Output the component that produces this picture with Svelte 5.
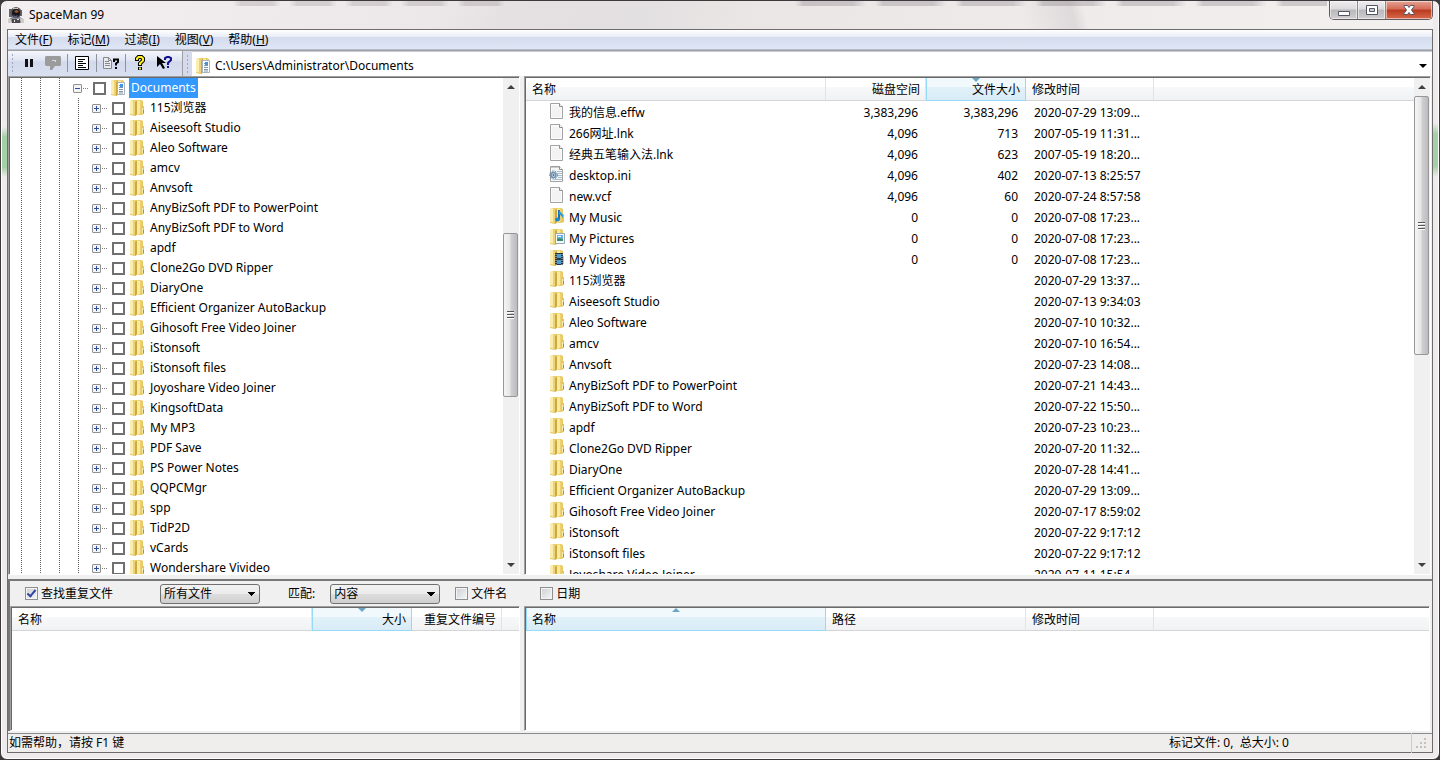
<script lang="ts">
  type Icon = 'file' | 'ini' | 'folder' | 'docs' | 'music' | 'pictures' | 'videos';

  interface Row {
    icon: Icon;
    name: string;
    disk?: string;
    size?: string;
    time: string;
  }

  const menus = [
    ['文件', 'F'],
    ['标记', 'M'],
    ['过滤', 'I'],
    ['视图', 'V'],
    ['帮助', 'H'],
  ];

  const folders = [
    '115浏览器', 'Aiseesoft Studio', 'Aleo Software', 'amcv', 'Anvsoft',
    'AnyBizSoft PDF to PowerPoint', 'AnyBizSoft PDF to Word', 'apdf',
    'Clone2Go DVD Ripper', 'DiaryOne', 'Efficient Organizer AutoBackup',
    'Gihosoft Free Video Joiner', 'iStonsoft', 'iStonsoft files',
    'Joyoshare Video Joiner', 'KingsoftData', 'My MP3', 'PDF Save',
    'PS Power Notes', 'QQPCMgr', 'spp', 'TidP2D', 'vCards', 'Wondershare Vivideo',
  ];

  const folderTimes = [
    '2020-07-29 13:37...', '2020-07-13 9:34:03', '2020-07-10 10:32...', '2020-07-10 16:54...',
    '2020-07-23 14:08...', '2020-07-21 14:43...', '2020-07-22 15:50...', '2020-07-23 10:23...',
    '2020-07-20 11:32...', '2020-07-28 14:41...', '2020-07-29 13:09...', '2020-07-17 8:59:02',
    '2020-07-22 9:17:12', '2020-07-22 9:17:12', '2020-07-11 15:54...',
  ];

  const rows: Row[] = [
    { icon: 'file', name: '我的信息.effw', disk: '3,383,296', size: '3,383,296', time: '2020-07-29 13:09...' },
    { icon: 'file', name: '266网址.lnk', disk: '4,096', size: '713', time: '2007-05-19 11:31...' },
    { icon: 'file', name: '经典五笔输入法.lnk', disk: '4,096', size: '623', time: '2007-05-19 18:20...' },
    { icon: 'ini', name: 'desktop.ini', disk: '4,096', size: '402', time: '2020-07-13 8:25:57' },
    { icon: 'file', name: 'new.vcf', disk: '4,096', size: '60', time: '2020-07-24 8:57:58' },
    { icon: 'music', name: 'My Music', disk: '0', size: '0', time: '2020-07-08 17:23...' },
    { icon: 'pictures', name: 'My Pictures', disk: '0', size: '0', time: '2020-07-08 17:23...' },
    { icon: 'videos', name: 'My Videos', disk: '0', size: '0', time: '2020-07-08 17:23...' },
    ...folderTimes.map((time, i): Row => ({ icon: 'folder', name: folders[i], time })),
  ];

  let findDuplicates = $state(true);
  let matchName = $state(false);
  let matchDate = $state(false);
</script>

{#snippet icon(kind: Icon)}
  <svg class="icon" viewBox="0 0 16 16" aria-hidden="true">
    {#if kind === 'file' || kind === 'ini'}
      <path d="M1.5.5h9l3 3v12h-12z" fill="#fbfbfb" stroke="#a3a3a3" />
      <path d="M3 14V2l6 1 3 3v8z" fill="#f3f3f3" />
      <path d="M10.5.5v3h3" fill="#fff" stroke="#8d8d8d" />
      {#if kind === 'ini'}
        <path d="M3 0v2M5 0v2M7 0v2M9 0v2" stroke="#999" />
        <path d="M8 5.500h5M9 7.500h4M9 9.500h4M9 11.500h4M5 13.500h8" stroke="#a9bfd2" />
        <circle cx="4.500" cy="9" r="4" fill="none" stroke="#5f87a8" stroke-dasharray="1.600 1.200" />
        <circle cx="4.500" cy="9" r="2.500" fill="#dce8f1" stroke="#6c92b2" stroke-width="1.500" />
        <circle cx="4.500" cy="9" r="1" fill="#3d6688" />
      {/if}
    {:else}
      <path d="M1 1 4 0h8l2 1v5l1 1v7l-3 1H8l-2 1-5-1z" fill="#e6c964" />
      <path d="M1 1l3-1v14.500L1 14z" fill="#f9edb0" />
      <path d="M4 .5h3V15l-3-.5z" fill="#ecd27a" />
      <path d="M6 2 8 1v13l-2 2z" fill="#cfa740" />
      <path d="M8 .5h3V14l-3 1z" fill="#faeb9c" />
      <path d="M11 .5h1.500V14H11z" fill="#ecd272" />
      <path d="M12.500 6H15v8h-2.500z" fill="#e3c460" />
      {#if kind === 'folder'}
        <path d="M14.500 10v3" stroke="#4ba0c8" />
        <path d="M13.500 8v5" stroke="#f7ecae" />
      {:else if kind === 'docs'}
        <path d="M7.500 2.500h7v12h-7z" fill="#fff" stroke="#a8b4c0" />
        <path d="M9 5.500h1M9 7.500h4M9 9.500h4M9 11.500h4M9 13h4" stroke="#8195a8" />
        <path d="M10 4h3v3h-3z" fill="#3c97e0" />
      {:else if kind === 'music'}
        <path d="M10 2v9" stroke="#1473b8" stroke-width="2" />
        <path d="M10 2c1 3 5 3 4 8-1-2-3-3-4-4z" fill="#2b9be0" />
        <ellipse cx="8.500" cy="11.500" rx="2.500" ry="2" fill="#1f86cc" />
      {:else if kind === 'pictures'}
        <path d="M6.500 4.500h9v10h-9z" fill="#f6fafd" stroke="#9aa7b2" />
        <path d="M8 6h6v6H8z" fill="#63b3e6" />
        <path d="M8 10l2-1 4 1v2H8z" fill="#3c8b6e" />
        <path d="M9 7h3v1H9z" fill="#fff" />
      {:else}
        <path d="M6 3h8v12H6z" fill="#27353f" />
        <path d="M8 4h4v4H8zM8 10h4v4H8z" fill="#4a9fd2" />
        <path d="M7 4v11M13 4v11" stroke="#c9d2d8" stroke-dasharray="1 1" />
      {/if}
    {/if}
  </svg>
{/snippet}

{#snippet scrollbar(before: number, thumb: number, after: number)}
  <div class="scrollbar">
    <button class="arrow" aria-label="向上滚动">
      <svg viewBox="0 0 8 4"><path d="M4 0l4 4H0z" /></svg>
    </button>
    <div class="track" style="flex-grow: {before}"></div>
    <div class="thumb" style="flex-grow: {thumb}">
      <svg viewBox="0 0 7 8"><path d="M0 .5h7M0 3.500h7M0 6.500h7" stroke="#555" /><path d="M0 1.500h7M0 4.500h7M0 7.500h7" stroke="#fff" /></svg>
    </div>
    <div class="track" style="flex-grow: {after}"></div>
    <button class="arrow" aria-label="向下滚动">
      <svg viewBox="0 0 8 4"><path d="M0 0h8L4 4z" /></svg>
    </button>
  </div>
{/snippet}

<div class="window">
  <header class="titlebar">
    <svg class="app-icon" viewBox="0 0 16 16" aria-hidden="true">
      <path d="M0 16l1-4 3-2h8l3 2 1 4z" fill="#8d8a8e" />
      <path d="M0 12l2-1 2 5H0zM12 11l4 1v4h-3z" fill="#cfcccb" />
      <path d="M4 12h8v4H4z" fill="#4a484c" />
      <path d="M6 13h1v2H6zM9 12h2v1H9z" fill="#e8e6e4" />
      <path d="M1 2h3v8H1zM12 3h2v6h-2z" fill="#69666a" />
      <circle cx="8" cy="5.500" r="5.500" fill="#59565a" />
      <circle cx="8" cy="6" r="4" fill="#161418" />
      <path d="M6 4l3-1 2 2-3 1z" fill="#9c5a3a" />
      <path d="M5 7l2 2 3-1-1 2H6z" fill="#47628c" />
      <path d="M5 1h5v1H5z" fill="#c8c4c2" />
    </svg>
    <h1>SpaceMan 99</h1>
    <div class="captions">
      <button class="caption" aria-label="最小化">
        <svg viewBox="0 0 14 14"><path d="M1.500 8.500h11v4h-11z" fill="#fff" stroke="#535666" /></svg>
      </button>
      <button class="caption" aria-label="最大化">
        <svg viewBox="0 0 14 14"><path d="M1.500 2.500h11v9h-11z" fill="#fff" stroke="#535666" /><path d="M4.500 5.500h5v3h-5z" fill="#ccc" stroke="#535666" /></svg>
      </button>
      <button class="caption close" aria-label="关闭">
        <svg viewBox="0 0 14 14"><path d="M2 2.500h3.500L7 4.500l1.500-2H12v1L9.500 7l2.500 3.500v1H8.500L7 9.500l-1.500 2H2v-1L4.500 7 2 3.500z" fill="#fff" stroke="#535666" /></svg>
      </button>
    </div>
  </header>

  <main class="client">
    <nav class="menubar">
      {#each menus as [label, key]}
        <button class="menu">{label}(<u>{key}</u>)</button>
      {/each}
    </nav>

    <div class="rebar">
      <div class="toolbar">
        <span class="grip"></span>
        <button class="tool" aria-label="暂停">
          <svg viewBox="0 0 16 16"><path d="M4 4h3v8H4zM9 4h3v8H9z" fill="#111" /></svg>
        </button>
        <button class="tool" aria-label="注释">
          <svg viewBox="0 0 16 16"><path d="M1 1h14l1 1v8l-1 1h-5l-3 4H5v-4H1l-1-1V2z" fill="#9b9b9b" /><path d="M7 5h4v1H7zM10 6h1v1h-1z" fill="#d5d9e8" /></svg>
        </button>
        <span class="rule"></span>
        <button class="tool" aria-label="属性">
          <svg viewBox="0 0 16 16"><path d="M1.500 1.500h13v13h-13z" fill="#fff" stroke="#000" /><path d="M4 4.500h7M4 6.500h5M4 8.500h8M4 10.500h5M4 12.500h8" stroke="#000" /></svg>
        </button>
        <span class="rule"></span>
        <button class="tool" aria-label="文件信息">
          <svg viewBox="0 0 16 16"><path d="M.5 2.500h5l3 3v8h-8z" fill="#e8ebf2" stroke="#888" /><path d="M5.500 2.500v3h3M2 6.500h4M2 8.500h5M2 10.500h5" fill="none" stroke="#888" /><path d="M11 7V4.500h4V7l-2 1.500v2M13 12v2" fill="none" stroke="#000" stroke-width="2" /></svg>
        </button>
        <span class="rule"></span>
        <button class="tool" aria-label="帮助">
          <svg viewBox="0 0 16 16"><path d="M5 6V3.500L6.500 2h3L11 3.500v2L8 8.500V11M8 12v3" fill="none" stroke="#000" stroke-width="4" /><path d="M5 5V3.500L6.500 2h3L11 3.500v2L8 8.500V10M8 12.500v2" fill="none" stroke="#ffef20" stroke-width="2" /></svg>
        </button>
        <button class="tool" aria-label="这是什么">
          <svg viewBox="0 0 16 16"><path d="M1 1v11l3-3 3 5 2-1-3-5h4z" fill="#000" /><path d="M9 5V3l2-1h2l2 1v2l-3 3v2M12 11v2" fill="none" stroke="#10108c" stroke-width="2" /></svg>
        </button>
      </div>
      <div class="address">
        <span class="grip"></span>
        <label class="path">
          {@render icon('docs')}
          <input type="text" aria-label="地址" value="C:\Users\Administrator\Documents" />
          <svg class="drop" viewBox="0 0 8 4" aria-hidden="true"><path d="M0 0h8L4 4z" /></svg>
        </label>
      </div>
    </div>

    <div class="split browser">
      <section class="pane tree-pane">
        <ul class="tree">
          <li class="node">
            <span class="guides root"></span>
            <button class="expander" aria-label="折叠"><svg viewBox="0 0 9 9"><path d="M2 4.500h5" /></svg></button>
            <span class="dots"></span>
            <label class="item">
              <input class="mark" type="checkbox" />
              {@render icon('docs')}
              <span class="name selected">Documents</span>
            </label>
          </li>
          {#each folders as name}
            <li class="node">
              <span class="guides"></span>
              <button class="expander" aria-label="展开"><svg viewBox="0 0 9 9"><path d="M2 4.500h5M4.500 2v5" /></svg></button>
              <span class="dots"></span>
              <label class="item">
                <input class="mark" type="checkbox" />
                {@render icon('folder')}
                <span class="name">{name}</span>
              </label>
            </li>
          {/each}
        </ul>
        {@render scrollbar(138, 163, 160)}
      </section>

      <section class="pane">
        <div class="list">
          <table>
            <colgroup><col class="w300" /><col class="w100" /><col class="w100" /><col class="w128" /><col /></colgroup>
            <thead>
              <tr><th>名称</th><th class="num">磁盘空间</th><th class="num sorted down">文件大小</th><th>修改时间</th><th></th></tr>
            </thead>
            <tbody>
              {#each rows as row}
                <tr>
                  <td><span class="cell">{@render icon(row.icon)}{row.name}</span></td>
                  <td class="num">{row.disk ?? ''}</td>
                  <td class="num">{row.size ?? ''}</td>
                  <td>{row.time}</td>
                  <td></td>
                </tr>
              {/each}
            </tbody>
          </table>
        </div>
        {@render scrollbar(0, 259, 202)}
      </section>
    </div>

    <section class="duplicates">
      <form class="filters">
        <label class="check find"><input type="checkbox" bind:checked={findDuplicates} />查找重复文件</label>
        <select class="type" aria-label="文件类型"><option>所有文件</option></select>
        <label class="match">匹配: <select><option>内容</option></select></label>
        <label class="check by-name"><input type="checkbox" bind:checked={matchName} />文件名</label>
        <label class="check"><input type="checkbox" bind:checked={matchDate} />日期</label>
      </form>
      <div class="split">
        <div class="pane">
          <table>
            <colgroup><col class="w300" /><col class="w100" /><col class="w90" /><col /></colgroup>
            <thead><tr><th>名称</th><th class="num sorted down">大小</th><th class="num">重复文件编号</th><th></th></tr></thead>
          </table>
        </div>
        <div class="pane">
          <table>
            <colgroup><col class="w300" /><col class="w200" /><col class="w128" /><col /></colgroup>
            <thead><tr><th class="sorted up">名称</th><th>路径</th><th>修改时间</th><th></th></tr></thead>
          </table>
        </div>
      </div>
    </section>

    <footer class="status">
      <span>如需帮助，请按 F1 键</span>
      <span class="totals">标记文件: 0,&nbsp; 总大小: 0</span>
      <svg class="size-grip" viewBox="0 0 12 12" aria-hidden="true"><path d="M8 1h2v2H8zM8 5h2v2H8zM8 9h2v2H8zM4 5h2v2H4zM4 9h2v2H4zM0 9h2v2H0z" fill="#c4c0c0" /></svg>
    </footer>
  </main>
</div>

<style>
  :global(body) {
    background: #3a3a3c;
  }

  .window {
    box-sizing: border-box;
    display: flex;
    flex-direction: column;
    height: 100vh;
    padding: 0 6px 6px;
    border: 1px solid #3c383b;
    border-radius: 7px;
    box-shadow: inset 0 0 0 1px #fff;
    background:
      linear-gradient(#a5d0a500, #a5d0a5 20%, #a5d0a5 80%, #a5d0a500) left 1px top 126px / 5px 50px no-repeat,
      linear-gradient(#a5d0a500, #a5d0a5 20%, #a5d0a5 80%, #a5d0a500) right 1px top 122px / 5px 54px no-repeat,
      #efeaeb;
    color: #000;
    font-family: "Noto Sans", "Noto Sans CJK SC", sans-serif;
    font-size: 12px;
    line-height: 20px;
  }

  button,
  input,
  select {
    font: inherit;
    color: inherit;
  }

  button {
    padding: 0;
    border: 0;
    background: none;
  }

  svg {
    display: block;
    flex: none;
  }

  .icon {
    width: 16px;
    height: 16px;
  }

  .titlebar {
    display: flex;
    flex: none;
    align-items: center;
    height: 28px;
    padding-left: 1px;
    background:
      repeating-linear-gradient(90deg, #0000 0 8px, #6d606833 16px 48px, #0000 56px) 218px 0 / 280px 5px no-repeat,
      repeating-linear-gradient(90deg, #0000 0 8px, #6d606844 16px 66px, #0000 80px) 780px 0 / 540px 5px no-repeat,
      linear-gradient(75deg, #0000 30%, #cfc9cb88 70%, #0000 80%) 980px 0 / 120px 28px no-repeat,
      linear-gradient(105deg, #f3eff0, #ece7e8 30%, #e5e0e1 35%, #e3e0e1 45%, #eae6e6 52%, #efebeb 75%, #f3f0f0);
  }

  .app-icon {
    width: 16px;
    height: 16px;
  }

  h1 {
    flex: 1;
    margin: 0 0 0 5px;
    font-size: 12px;
    font-weight: 400;
  }

  .captions {
    display: flex;
    align-self: flex-start;
    border: 1px solid #5f5b60;
    border-top: 0;
    border-radius: 0 0 5px 5px;
    overflow: hidden;
  }

  .caption {
    display: grid;
    place-items: center;
    box-sizing: border-box;
    width: 28px;
    height: 18px;
    border-right: 1px solid #8a868a;
    background: linear-gradient(#efedee, #dcdadc 45%, #b9b7bb 50%, #d0ced0);
    box-shadow: inset 0 0 0 1px #ffffff88;
  }

  .caption.close {
    width: 46px;
    border-right: 0;
    background: linear-gradient(#e5a495, #d56a54 45%, #b93a20 50%, #d9694a);
  }

  .caption svg {
    width: 14px;
    height: 14px;
  }

  .client {
    display: flex;
    flex: 1;
    flex-direction: column;
    min-height: 0;
    border: 1px solid #6f6c6e;
    background: #f0f0f0;
  }

  .menubar {
    display: flex;
    flex: none;
    gap: 15px;
    height: 19px;
    padding-left: 7px;
    border-bottom: 1px solid #b6bccc;
    background: linear-gradient(#fff, #e9edf6 35%, #d4dbed 36%, #dfe6f5);
    line-height: 19px;
  }

  .rebar {
    display: flex;
    flex: none;
    height: 25px;
    border-top: 1px solid #a0a0a0;
    background: #d5dbec;
  }

  .toolbar {
    display: flex;
    align-items: center;
    box-sizing: border-box;
    width: 175px;
    padding-bottom: 2px;
    background: linear-gradient(#f4f6fb, #e1e6f3 35%, #d2d9ec 45%, #d9e0f0);
    border-right: 1px solid #a0a0a0;
  }

  .grip {
    width: 3px;
    height: 20px;
    margin: 0 3px;
    background: radial-gradient(circle, #a3a9bb 1px, #0000 1px) 0 0 / 3px 4px;
  }

  .tool {
    display: grid;
    place-items: center;
    width: 24px;
    height: 22px;
  }

  .tool svg {
    width: 16px;
    height: 16px;
  }

  .rule {
    width: 1px;
    height: 18px;
    margin: 0 2px;
    background: #8f939e;
  }

  .address {
    display: flex;
    flex: 1;
    align-items: center;
  }

  .path {
    display: flex;
    flex: 1;
    align-items: center;
    align-self: stretch;
    gap: 4px;
    padding: 3px 5px 0 3px;
    border-top: 1px solid #c8ccd6;
    background: #fff;
  }

  .path input {
    flex: 1;
    min-width: 0;
    padding: 0;
    border: 0;
    outline: 0;
    background: none;
  }

  .drop {
    width: 8px;
    height: 4px;
  }

  .split {
    display: grid;
    flex: 1;
    grid-template-columns: 512px minmax(0, 1fr);
    gap: 4px;
    min-height: 0;
  }

  .browser {
    padding-right: 1px;
  }

  .pane {
    display: flex;
    min-width: 0;
    min-height: 0;
    overflow: hidden;
    border: 1px solid;
    border-color: #a0a0a0 #fff #fff #a0a0a0;
    box-shadow: inset 1px 1px #696969;
    padding: 1px 0 0 1px;
    background: #fff;
  }

  .tree {
    flex: 1;
    margin: 0;
    padding: 0;
    overflow: hidden;
    list-style: none;
  }

  .node {
    display: flex;
    align-items: center;
    height: 20px;
  }

  .guides {
    align-self: stretch;
    width: 82px;
    background:
      repeating-linear-gradient(#fff0 0 1px, #fff 1px 2px),
      repeating-linear-gradient(90deg, #fff 0 11px, #606060 11px 12px, #fff 12px 19px);
  }

  .guides.root {
    width: 63px;
  }

  .expander {
    box-sizing: border-box;
    width: 9px;
    height: 9px;
    border: 1px solid #919191;
    border-radius: 1px;
    background: #f4f4f4;
  }

  .expander svg {
    width: 9px;
    height: 9px;
    margin: -1px;
    stroke: #2c4c9c;
  }

  .dots {
    width: 5px;
    height: 1px;
    margin: 0 5px 0 1px;
    background: repeating-linear-gradient(90deg, #808080 0 1px, #fff 1px 2px);
  }

  .item {
    display: flex;
    align-items: center;
  }

  .mark {
    box-sizing: border-box;
    width: 13px;
    height: 13px;
    margin: 0 4px 0 0;
    border: 2px solid #707070;
    appearance: none;
    background: #fff;
  }

  .name {
    margin-left: 3px;
    padding: 0 2px;
  }

  .selected {
    background: #3399ff;
    color: #fff;
  }

  .scrollbar {
    display: flex;
    flex: none;
    flex-direction: column;
    width: 16px;
    background: #f0f0f0;
  }

  .arrow {
    display: grid;
    flex: none;
    place-items: center;
    height: 18px;
  }

  .arrow svg {
    width: 8px;
    height: 4px;
    fill: #404040;
  }

  .track,
  .thumb {
    flex-basis: 0;
  }

  .thumb {
    box-sizing: border-box;
    display: grid;
    place-items: center;
    margin-right: 1px;
    border: 1px solid #979797;
    border-radius: 2px;
    background: linear-gradient(90deg, #f5f5f5, #e6e6e8 45%, #cfcfd2 55%, #bcbcc0);
  }

  .thumb svg {
    width: 7px;
    height: 8px;
  }

  .list {
    flex: 1;
    min-width: 0;
    overflow: hidden;
  }

  table {
    align-self: flex-start;
    width: 100%;
    border-collapse: separate;
    border-spacing: 0;
    table-layout: fixed;
  }

  .w300 { width: 300px; }
  .w200 { width: 200px; }
  .w128 { width: 128px; }
  .w100 { width: 100px; }
  .w90 { width: 90px; }

  th {
    box-sizing: border-box;
    height: 23px;
    padding: 2px 6px 0;
    border-right: 1px solid #e2e3e5;
    border-bottom: 1px solid #d5d5d5;
    background: linear-gradient(#fff 40%, #f7f8fa 41%, #f1f2f4);
    font-weight: 400;
    text-align: left;
    white-space: nowrap;
  }

  th:last-child {
    border-right: 0;
  }

  th.num {
    padding-right: 5px;
  }

  th.sorted {
    border-right-color: #96d9f9;
    border-bottom-color: #96d9f9;
    box-shadow: inset 1px 0 #96d9f9;
    background: linear-gradient(#f2f9fc 40%, #e1f1f9 41%, #d8ecf6);
    position: relative;
  }

  th.sorted::after {
    content: "";
    position: absolute;
    top: 0;
    left: calc(50% - 4px);
    border: solid transparent;
    border-width: 0 4px;
  }

  th.down::after {
    border-top: 4px solid #6aa7c4;
  }

  th.up::after {
    border-bottom: 4px solid #6aa7c4;
  }

  td {
    box-sizing: border-box;
    height: 21px;
    padding: 2px 8px 0;
    line-height: 19px;
    white-space: nowrap;
  }

  tbody td:first-child {
    padding-left: 23px;
  }

  .num {
    text-align: right;
  }

  .cell {
    display: flex;
    gap: 4px;
    align-items: center;
    height: 19px;
  }

  .cell .icon {
    margin-bottom: 3px;
  }

  .duplicates {
    display: flex;
    flex: none;
    flex-direction: column;
    height: 150px;
    margin: 4px 0 2px;
    padding-right: 2px;
    border-top: 2px solid #777;
    border-left: 2px solid #777;
  }

  .duplicates .split {
    grid-template-columns: 510px minmax(0, 1fr);
  }

  .filters {
    display: flex;
    flex: none;
    align-items: center;
    height: 25px;
    padding-left: 15px;
  }

  .check,
  .match {
    display: flex;
    align-items: center;
    gap: 3px;
  }

  .check input {
    display: grid;
    place-items: center;
    box-sizing: border-box;
    width: 13px;
    height: 13px;
    margin: 0;
    border: 1px solid #8e8f8f;
    appearance: none;
    background: linear-gradient(135deg, #cbcfd5, #f6f6f6);
    box-shadow: inset 0 0 0 1px #f4f4f4;
  }

  .check input:checked::after {
    content: "";
    width: 3px;
    height: 7px;
    margin-top: -2px;
    border: solid #31479e;
    border-width: 0 2px 2px 0;
    transform: rotate(40deg);
  }

  .find {
    width: 135px;
  }

  .by-name {
    width: 85px;
  }

  select {
    box-sizing: border-box;
    width: 110px;
    height: 20px;
    padding: 0 3px;
    border: 1px solid #707070;
    border-radius: 3px;
    appearance: none;
    background:
      conic-gradient(from -45deg at 50% 100%, #000 90deg, #0000 0) right 4px center / 8px 4px no-repeat,
      linear-gradient(#f2f2f2, #ebebeb 50%, #ddd 51%, #cfcfcf);
    line-height: 18px;
  }

  select.type {
    width: 100px;
    margin-right: 28px;
  }

  .match {
    gap: 15px;
    margin-right: 15px;
  }

  .status {
    display: flex;
    flex: none;
    align-items: center;
    height: 18px;
    padding-left: 1px;
    border-top: 1px solid #8b8b8b;
    background: #f0eded;
    line-height: 20px;
  }

  .totals {
    flex: none;
    width: 242px;
    margin-left: auto;
    border-right: 1px solid #d0cccc;
  }

  .size-grip {
    width: 12px;
    height: 12px;
    margin: 0 4px;
  }
</style>
